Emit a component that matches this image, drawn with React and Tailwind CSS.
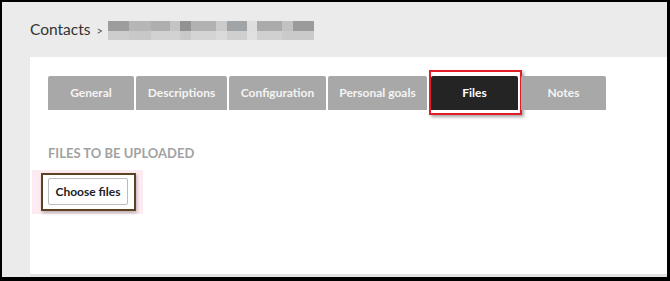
import React from 'react';

const tabs = [
  { label: 'General', w: 'w-[86px]', gap: 'mr-[2px]' },
  { label: 'Descriptions', w: 'w-[91px]', gap: 'mr-[2px]' },
  { label: 'Configuration', w: 'w-[97px]', gap: 'mr-[2px]' },
  { label: 'Personal goals', w: 'w-[99px]', gap: 'mr-[4px]' },
  { label: 'Files', w: 'w-[87px]', gap: 'mr-[3px]', active: true },
  { label: 'Notes', w: 'w-[85px]', gap: '' },
];

// blurred breadcrumb name, two rows of pixel blocks
const topRow = [
  ['w-[21px]', 'bg-[#9d9d9d]'],
  ['w-[22px]', 'bg-[#b6b6b6]'],
  ['w-[19px]', 'bg-[#aeaeae]'],
  ['w-[10px]', 'bg-[#c4c4c4]'],
  ['w-[11px]', 'bg-[#929292]'],
  ['w-[25px]', 'bg-[#b2b2b2]'],
  ['w-[11px]', 'bg-[#cbcbcb]'],
  ['w-[20px]', 'bg-[#a0a4a6]'],
  ['w-[10px]', 'bg-[#dedede]'],
  ['w-[25px]', 'bg-[#ababab]'],
  ['w-[11px]', 'bg-[#c2c2c2]'],
  ['w-[21px]', 'bg-[#9b9b9b]'],
];

const bottomRow = [
  ['w-[21px]', 'bg-[#cdcdcd]'],
  ['w-[22px]', 'bg-[#c8c8c8]'],
  ['w-[29px]', 'bg-[#d2d2d2]'],
  ['w-[11px]', 'bg-[#c9c9c9]'],
  ['w-[25px]', 'bg-[#d4d4d4]'],
  ['w-[11px]', 'bg-[#dadada]'],
  ['w-[20px]', 'bg-[#cfcfcf]'],
  ['w-[10px]', 'bg-[#e0e0e0]'],
  ['w-[25px]', 'bg-[#d0d0d0]'],
  ['w-[32px]', 'bg-[#cacaca]'],
];

const Tab = ({ label, w, gap, active }) => (
  <div className={`relative ${gap}`}>
    <div
      className={`${w} h-[34px] flex items-center justify-center rounded-t-[2px] text-[12px] font-bold ${
        active ? 'bg-[#242424] text-white' : 'bg-[#a8a8a8] text-[#f4f4f4]'
      }`}
    >
      {label}
    </div>
    {active && (
      <div className="absolute left-[-2px] top-[-6px] w-[93px] h-[45px] border-2 border-[#e11d2a] shadow-[2px_2px_3px_rgba(0,0,0,0.35)]" />
    )}
  </div>
);

export default function App() {
  return (
    <div className="w-[670px] h-[281px] bg-[#ebebeb] border-black border-l-2 border-t-2 border-r-[3px] border-b-[4px] flex flex-col font-['Lato','Liberation_Sans',sans-serif]">
      <div className="h-[55px] pl-[28px] flex items-center">
        <span className="text-[15.5px] text-[#333]">Contacts</span>
        <span className="ml-[6px] mt-[4px] text-[11px] text-[#555]">&gt;</span>
        <div className="ml-[5px] mt-[1px] flex flex-col">
          <div className="flex h-[10px]">
            {topRow.map(([w, c], i) => (
              <div key={i} className={`${w} ${c}`} />
            ))}
          </div>
          <div className="flex h-[9px]">
            {bottomRow.map(([w, c], i) => (
              <div key={i} className={`${w} ${c}`} />
            ))}
          </div>
        </div>
      </div>

      <div className="flex-1 ml-[28px] bg-white border-b-[3px] border-[#e2e2e2] pl-[18px] pt-[19px]">
        <div className="flex">
          {tabs.map((t) => (
            <Tab key={t.label} {...t} />
          ))}
        </div>

        <div className="mt-[35px] text-[13px] font-bold text-[#a2a2a2] leading-[16px]">
          FILES TO BE UPLOADED
        </div>

        <div className="mt-[9px] -ml-[16px] w-[111px] bg-[#fcebf1] pl-[9px] pt-[3px] pb-[3px]">
          <div className="w-[95px] h-[38px] border-2 border-[#5e4322] bg-white pl-[5px] pt-[3px] shadow-[1px_2px_3px_rgba(0,0,0,0.25)]">
            <button className="w-[80px] h-[27px] border border-[#bdbdbd] rounded-[2px] bg-white text-[12px] font-bold text-[#222] flex items-center justify-center">
              Choose files
            </button>
          </div>
        </div>
      </div>
    </div>
  );
}
